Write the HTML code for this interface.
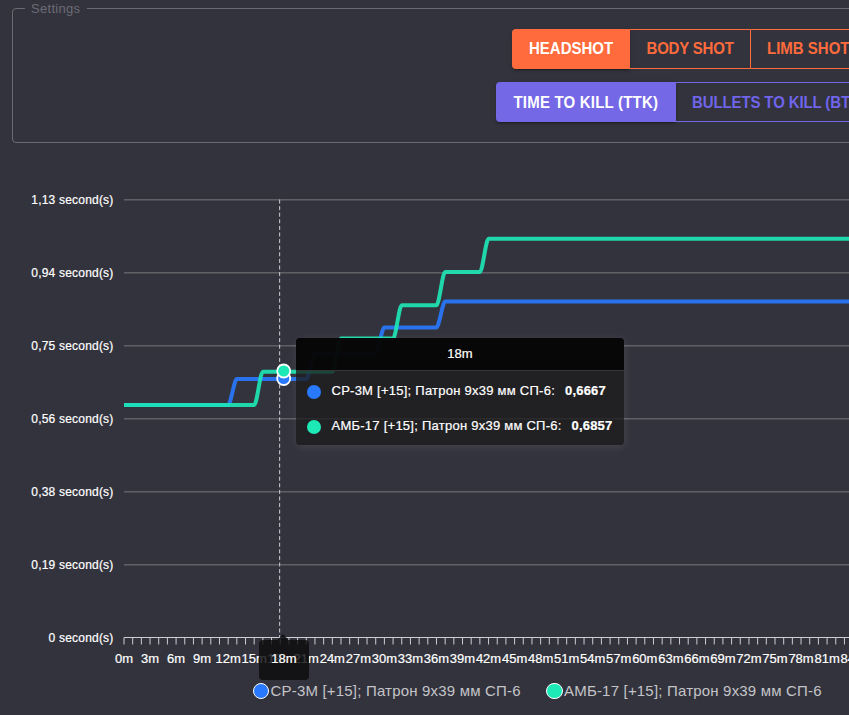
<!DOCTYPE html>
<html><head><meta charset="utf-8">
<style>
html,body{margin:0;padding:0;}
body{width:849px;height:715px;overflow:hidden;background:#33333d;position:relative;font-family:"Liberation Sans",sans-serif;}
.fs{position:absolute;left:12px;top:8px;width:900px;height:135px;border:1px solid #6a6a72;border-radius:4px;box-sizing:border-box;}
.lg{position:absolute;left:12px;top:-9px;height:18px;padding:0 6.5px 0 6px;background:#33333d;color:#6b6b75;font-size:13px;line-height:18px;letter-spacing:0.3px;}
.btn{position:absolute;box-sizing:border-box;height:40px;font-size:15px;font-weight:bold;text-align:center;white-space:nowrap;letter-spacing:0.3px;}
.o{border:1px solid #ff6b3c;color:#ff6b3c;line-height:36px;}
.oa{background:#ff6b3c;color:#fff;border-radius:4px 0 0 4px;line-height:37px;box-shadow:0 3px 1px -2px rgba(0,0,0,.2),0 2px 2px 0 rgba(0,0,0,.14),0 1px 5px 0 rgba(0,0,0,.12);}
.p{border:1px solid #7568e6;color:#6f64ea;line-height:37px;}
.pa{background:#7568e6;color:#fff;border-radius:4px 0 0 4px;line-height:38px;box-shadow:0 3px 1px -2px rgba(0,0,0,.2),0 2px 2px 0 rgba(0,0,0,.14),0 1px 5px 0 rgba(0,0,0,.12);}
svg{position:absolute;left:0;top:0;}
.bt{position:absolute;height:40px;line-height:37px;font-size:15px;font-weight:bold;white-space:nowrap;transform:scaleY(1.1);transform-origin:0 13.5px;}
.yl{position:absolute;right:735.5px;font-size:12px;line-height:15px;color:#fff;white-space:nowrap;letter-spacing:0.2px;-webkit-text-stroke:0.2px #fff;}
.xl{position:absolute;top:651px;width:40px;text-align:center;font-size:13px;line-height:15px;color:#fff;-webkit-text-stroke:0.2px #fff;}
.tt{position:absolute;left:296px;top:338px;width:328px;height:107px;border-radius:4px;background:rgba(28,28,30,0.78);overflow:hidden;box-shadow:1px 2px 10px rgba(255,255,255,0.09);color:#fff;font-size:13px;-webkit-text-stroke:0.2px #fff;}
.tth{position:absolute;left:0;top:0;width:328px;height:32px;background:rgba(4,4,4,0.89);line-height:32px;text-align:center;border-bottom:1px solid rgba(58,58,58,0.92);}
.lab{position:absolute;height:16px;line-height:16px;white-space:nowrap;letter-spacing:0.25px;}
.val{position:absolute;height:16px;line-height:16px;white-space:nowrap;font-weight:bold;letter-spacing:0.2px;}
.dot{position:absolute;width:14px;height:14px;border-radius:50%;}
.ap{position:absolute;left:259px;top:640px;width:50px;height:40px;border-radius:4px;background:rgba(12,12,14,0.82);}
.apt{position:absolute;left:259px;top:640px;width:50px;height:40px;color:#fff;font-size:13px;text-align:center;line-height:38px;-webkit-text-stroke:0.2px #fff;}
.legend{position:absolute;top:682px;font-size:15px;line-height:17px;color:#c4c4c8;white-space:nowrap;letter-spacing:0.19px;}
.ld{position:absolute;width:14.5px;height:14.5px;border-radius:50%;border:1px solid #fff;top:682.5px;}
</style></head><body>
<div class="fs"><div class="lg">Settings</div></div>
<div class="btn oa" style="left:512px;top:29px;width:118px;"></div>
<div class="btn o" style="left:630px;top:29px;width:121px;border-left:none;"></div>
<div class="btn o" style="left:750px;top:29px;width:140px;"></div>
<div class="btn pa" style="left:496px;top:82px;width:180px;"></div>
<div class="btn p" style="left:676px;top:82px;width:220px;border-left:none;"></div>
<div class="bt" style="left:529px;top:28.7px;color:#fff;letter-spacing:0px">HEADSHOT</div>
<div class="bt" style="left:646.5px;top:28.7px;color:#ff6b3c;letter-spacing:-0.2px">BODY SHOT</div>
<div class="bt" style="left:767px;top:28.7px;color:#ff6b3c;letter-spacing:0px">LIMB SHOT</div>
<div class="bt" style="left:513.5px;top:82.6px;color:#fff;letter-spacing:0.2px">TIME TO KILL (TTK)</div>
<div class="bt" style="left:692px;top:82.6px;color:#6f64ea;letter-spacing:-0.12px">BULLETS TO KILL (BTK)</div>
<svg width="849" height="715" viewBox="0 0 849 715">
<rect x="124" y="199" width="725" height="1" fill="#5f5f66"/><rect x="124" y="200" width="725" height="1" fill="#4a4a52"/>
<rect x="124" y="272" width="725" height="1" fill="#5f5f66"/><rect x="124" y="273" width="725" height="1" fill="#4a4a52"/>
<rect x="124" y="345" width="725" height="1" fill="#5f5f66"/><rect x="124" y="346" width="725" height="1" fill="#4a4a52"/>
<rect x="124" y="418" width="725" height="1" fill="#5f5f66"/><rect x="124" y="419" width="725" height="1" fill="#4a4a52"/>
<rect x="124" y="491" width="725" height="1" fill="#5f5f66"/><rect x="124" y="492" width="725" height="1" fill="#4a4a52"/>
<rect x="124" y="564" width="725" height="1" fill="#5f5f66"/><rect x="124" y="565" width="725" height="1" fill="#4a4a52"/>
<rect x="124" y="637" width="725" height="1" fill="#d0d0d4"/>
<path d="M124.00 637.5V644.5M132.68 637.5V644.5M141.36 637.5V644.5M150.04 637.5V644.5M158.72 637.5V644.5M167.40 637.5V644.5M176.08 637.5V644.5M184.76 637.5V644.5M193.44 637.5V644.5M202.12 637.5V644.5M210.80 637.5V644.5M219.48 637.5V644.5M228.16 637.5V644.5M236.84 637.5V644.5M245.52 637.5V644.5M254.20 637.5V644.5M262.88 637.5V644.5M271.56 637.5V644.5M280.24 637.5V644.5M288.92 637.5V644.5M297.60 637.5V644.5M306.28 637.5V644.5M314.96 637.5V644.5M323.64 637.5V644.5M332.32 637.5V644.5M341.00 637.5V644.5M349.68 637.5V644.5M358.36 637.5V644.5M367.04 637.5V644.5M375.72 637.5V644.5M384.40 637.5V644.5M393.08 637.5V644.5M401.76 637.5V644.5M410.44 637.5V644.5M419.12 637.5V644.5M427.80 637.5V644.5M436.48 637.5V644.5M445.16 637.5V644.5M453.84 637.5V644.5M462.52 637.5V644.5M471.20 637.5V644.5M479.88 637.5V644.5M488.56 637.5V644.5M497.24 637.5V644.5M505.92 637.5V644.5M514.60 637.5V644.5M523.28 637.5V644.5M531.96 637.5V644.5M540.64 637.5V644.5M549.32 637.5V644.5M558.00 637.5V644.5M566.68 637.5V644.5M575.36 637.5V644.5M584.04 637.5V644.5M592.72 637.5V644.5M601.40 637.5V644.5M610.08 637.5V644.5M618.76 637.5V644.5M627.44 637.5V644.5M636.12 637.5V644.5M644.80 637.5V644.5M653.48 637.5V644.5M662.16 637.5V644.5M670.84 637.5V644.5M679.52 637.5V644.5M688.20 637.5V644.5M696.88 637.5V644.5M705.56 637.5V644.5M714.24 637.5V644.5M722.92 637.5V644.5M731.60 637.5V644.5M740.28 637.5V644.5M748.96 637.5V644.5M757.64 637.5V644.5M766.32 637.5V644.5M775.00 637.5V644.5M783.68 637.5V644.5M792.36 637.5V644.5M801.04 637.5V644.5M809.72 637.5V644.5M818.40 637.5V644.5M827.08 637.5V644.5M835.76 637.5V644.5M844.44 637.5V644.5" stroke="#cdcdd1" stroke-width="1" fill="none"/>
<line x1="279.65" y1="199.5" x2="279.65" y2="637" stroke="#cfcfd3" stroke-width="1" stroke-dasharray="4 2.6"/>
<path d="M124.00 404.93L228.16 404.93C230.79 404.93 234.21 379.09 236.84 379.09L306.28 379.09C308.91 379.09 312.33 353.25 314.96 353.25L375.72 353.25C378.35 353.25 381.77 327.41 384.40 327.41L436.48 327.41C439.11 327.41 442.53 301.57 445.16 301.57L992.00 301.57" stroke="#2979ff" stroke-opacity="0.9" stroke-width="4" fill="none" stroke-linejoin="round" stroke-linecap="butt"/>
<path d="M124.00 404.93L254.20 404.93C256.97 404.93 260.11 371.71 262.88 371.71L332.32 371.71C335.09 371.71 338.23 338.49 341.00 338.49L393.08 338.49C395.85 338.49 398.99 305.26 401.76 305.26L436.48 305.26C439.25 305.26 442.39 272.04 445.16 272.04L479.88 272.04C482.65 272.04 485.79 238.81 488.56 238.81L992.00 238.81" stroke="#1de9b6" stroke-opacity="0.9" stroke-width="4" fill="none" stroke-linejoin="round" stroke-linecap="butt"/>
<circle cx="283.7" cy="378.5" r="6.5" fill="#2979ff" stroke="#fff" stroke-width="1.8"/>
<circle cx="283.7" cy="371" r="6.5" fill="#1de9b6" stroke="#fff" stroke-width="1.8"/>
</svg>
<div class="yl" style="top:192.5px">1,13 second(s)</div><div class="yl" style="top:265.5px">0,94 second(s)</div><div class="yl" style="top:338.5px">0,75 second(s)</div><div class="yl" style="top:411.5px">0,56 second(s)</div><div class="yl" style="top:484.5px">0,38 second(s)</div><div class="yl" style="top:557.5px">0,19 second(s)</div><div class="yl" style="top:630.5px">0 second(s)</div>
<div class="xl" style="left:104.00px">0m</div><div class="xl" style="left:130.04px">3m</div><div class="xl" style="left:156.08px">6m</div><div class="xl" style="left:182.12px">9m</div><div class="xl" style="left:208.16px">12m</div><div class="xl" style="left:234.20px">15m</div><div class="xl" style="left:260.24px">18m</div><div class="xl" style="left:286.28px">21m</div><div class="xl" style="left:312.32px">24m</div><div class="xl" style="left:338.36px">27m</div><div class="xl" style="left:364.40px">30m</div><div class="xl" style="left:390.44px">33m</div><div class="xl" style="left:416.48px">36m</div><div class="xl" style="left:442.52px">39m</div><div class="xl" style="left:468.56px">42m</div><div class="xl" style="left:494.60px">45m</div><div class="xl" style="left:520.64px">48m</div><div class="xl" style="left:546.68px">51m</div><div class="xl" style="left:572.72px">54m</div><div class="xl" style="left:598.76px">57m</div><div class="xl" style="left:624.80px">60m</div><div class="xl" style="left:650.84px">63m</div><div class="xl" style="left:676.88px">66m</div><div class="xl" style="left:702.92px">69m</div><div class="xl" style="left:728.96px">72m</div><div class="xl" style="left:755.00px">75m</div><div class="xl" style="left:781.04px">78m</div><div class="xl" style="left:807.08px">81m</div><div class="xl" style="left:833.12px">84m</div><div class="xl" style="left:859.16px">87m</div>
<div class="ap"></div>
<svg width="849" height="715" viewBox="0 0 849 715"><path d="M277.5 640 L283 634 L288.5 640Z" fill="rgba(12,12,14,0.85)"/></svg>
<div class="apt">18m</div>
<div class="tt"><div class="tth">18m</div>
<div class="dot" style="left:11px;top:46.5px;background:#2979ff"></div>
<div class="lab" style="left:35.5px;top:45px">СР-3М [+15]; Патрон 9x39 мм СП-6:</div>
<div class="val" style="left:269px;top:45px">0,6667</div>
<div class="dot" style="left:11px;top:81.5px;background:#1de9b6"></div>
<div class="lab" style="left:35.5px;top:80px">АМБ-17 [+15]; Патрон 9x39 мм СП-6:</div>
<div class="val" style="left:275.5px;top:80px">0,6857</div>
</div>
<div class="ld" style="left:252.5px;background:#2979ff"></div>
<div class="legend" style="left:270.5px">СР-3М [+15]; Патрон 9x39 мм СП-6</div>
<div class="ld" style="left:546.3px;background:#1de9b6"></div>
<div class="legend" style="left:564px">АМБ-17 [+15]; Патрон 9x39 мм СП-6</div>
</body></html>
